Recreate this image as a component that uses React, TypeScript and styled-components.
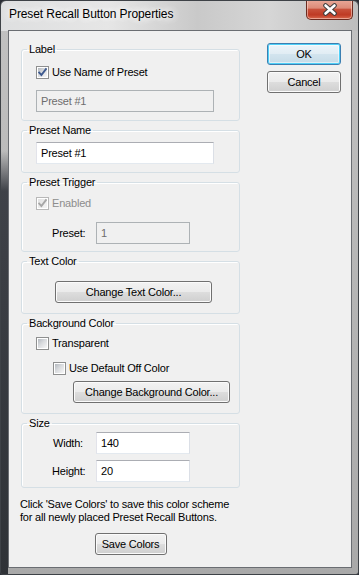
import React from "react";
import styled, { createGlobalStyle, css } from "styled-components";

const Global = createGlobalStyle`
  html, body { margin: 0; padding: 0; background: #2b2f36; }
  body { font-family: "Liberation Sans", Arial, sans-serif; }
  * { box-sizing: border-box; }
`;

const Window = styled.div`
  width: 359px;
  height: 575px;
  border: 1px solid #3e4247;
  border-radius: 6px 6px 3px 3px;
  display: flex;
  flex-direction: column;
  padding: 0 6px 6px 7px;
  background:
    linear-gradient(to bottom, rgba(0,0,0,0) 0, rgba(0,0,0,0) 150px, rgba(28,32,40,0.78) 190px, rgba(20,24,30,0.82) 100%) left top / 7px 100% no-repeat,
    linear-gradient(to right, #dedfe0 0%, #e6e6e6 30%, #c9c9c9 55%, #d6d6d6 75%, #bdbdbd 100%) top / 100% 30px no-repeat,
    linear-gradient(to bottom, #c2c2c2, #a9a9a9);
  overflow: hidden;
`;

const TitleBar = styled.div`
  height: 29px;
  display: flex;
  align-items: flex-start;
  justify-content: space-between;
  margin-right: -1px;
`;

const Title = styled.div`
  padding: 6px 0 0 1px;
  font-size: 12px;
  line-height: 15px;
  letter-spacing: -0.1px;
  color: #000;
  text-shadow: 0 0 6px #fff, 0 0 10px #fff, 0 0 14px #fff;
`;

const CloseButton = styled.div`
  width: 47px;
  height: 20px;
  margin-top: -1px;
  border: 1px solid #6b2b20;
  border-top: none;
  border-radius: 0 0 5px 5px;
  background: linear-gradient(to bottom, #e9a999 0%, #dc8b78 42%, #c8503a 50%, #bf3a24 78%, #d8674c 100%);
  box-shadow: inset 0 0 0 1px rgba(255, 220, 210, 0.55);
  display: flex;
  align-items: center;
  justify-content: center;
`;

const Client = styled.div`
  flex: 1;
  border: 1px solid #6a6d72;
  background: #f0f0f0;
  display: flex;
  padding: 12px 0 0 12px;
  font-size: 11px;
  letter-spacing: -0.2px;
  color: #000;
`;

const LeftColumn = styled.div`
  width: 219px;
  display: flex;
  flex-direction: column;
  gap: 3px;
`;

const RightColumn = styled.div`
  margin-left: 27px;
  width: 74px;
  display: flex;
  flex-direction: column;
  gap: 6px;
`;

const Group = styled.fieldset`
  margin: 0;
  padding: 0;
  min-width: 0;
  border: 1px solid #d5dfe5;
  border-radius: 3px;
  box-shadow: inset 1px 1px 0 #fff;
`;

const Legend = styled.legend`
  margin-left: 5px;
  padding: 0 2px;
  font-size: 11px;
  line-height: 13px;
  height: 13px;
  color: #000;
`;

const GroupBody = styled.div<{ $pt: number; $pb: number; $gap?: number; $pl?: number }>`
  display: flex;
  flex-direction: column;
  align-items: flex-start;
  padding: ${(p) => p.$pt}px 0 ${(p) => p.$pb}px ${(p) => p.$pl ?? 14}px;
  gap: ${(p) => p.$gap ?? 0}px;
`;

const CheckRow = styled.label<{ $indent?: number; $disabled?: boolean; $top?: number }>`
  display: flex;
  align-items: center;
  gap: 3px;
  height: 13px;
  margin: ${(p) => p.$top ?? 0}px 0 0 ${(p) => p.$indent ?? 0}px;
  line-height: 13px;
  color: ${(p) => (p.$disabled ? "#8d8d8d" : "#000")};
`;

const Box = styled.span<{ $disabled?: boolean }>`
  width: 13px;
  height: 13px;
  flex: none;
  border: 1px solid ${(p) => (p.$disabled ? "#b8b8b8" : "#8e8f8f")};
  padding: 1px;
  background:
    ${(p) =>
      p.$disabled
        ? "linear-gradient(135deg, #e2e2e2, #f4f4f4) content-box"
        : "linear-gradient(135deg, #b4b9bf 0%, #d9dbde 45%, #f7f7f7 100%) content-box"},
    #fbfbfb;
  box-shadow: inset 0 0 0 1px #fff;
  display: flex;
`;

const CheckMark = styled.svg`
  width: 11px;
  height: 11px;
  margin: -1px;
  flex: none;
`;

const TextField = styled.div<{ $w: number; $disabled?: boolean }>`
  width: ${(p) => p.$w}px;
  height: 22px;
  border: 1px solid;
  ${(p) =>
    p.$disabled
      ? css`
          border-color: #adb2b5;
          background: #f0f0f0;
          color: #6d6d6d;
        `
      : css`
          border-color: #abadb3 #dbdfe6 #e3e9ef #e2e3ea;
          background: #fff;
          color: #000;
        `}
  padding-left: 4px;
  line-height: 20px;
  font-size: 11px;
`;

const FieldRow = styled.div`
  display: grid;
  grid-template-columns: 44px auto;
  align-items: center;
  margin-left: 16px;
`;

const FieldLabel = styled.span<{ $shift?: number }>`
  margin-left: ${(p) => p.$shift ?? 0}px;
`;

const Button = styled.button<{ $w?: number; $primary?: boolean; $indent?: number; $top?: number }>`
  width: ${(p) => (p.$w ? `${p.$w}px` : "100%")};
  height: 22px;
  margin: ${(p) => p.$top ?? 0}px 0 0 ${(p) => p.$indent ?? 0}px;
  padding: 0;
  border: 1px solid #707070;
  border-radius: 3px;
  font-family: "Liberation Sans", Arial, sans-serif;
  font-size: 11px;
  letter-spacing: -0.2px;
  color: #000;
  background: linear-gradient(to bottom, #f2f2f2 0%, #ebebeb 48%, #dddddd 52%, #cfcfcf 100%);
  box-shadow: inset 0 0 0 1px #fbfbfb;
  ${(p) =>
    p.$primary &&
    css`
      border-color: #3c7fb1;
      background: linear-gradient(to bottom, #edf5fa 0%, #e1edf4 48%, #d2e4ee 52%, #c5dbe7 100%);
      box-shadow: inset 0 0 0 1px #4fd0f8, inset 0 0 0 2px rgba(255,255,255,0.5);
    `}
`;

const Note = styled.div`
  margin-top: 7px;
  margin-left: -1px;
  line-height: 13px;
  white-space: nowrap;
`;

const SaveRow = styled.div`
  display: flex;
  justify-content: center;
  margin-top: 6px;
`;

function Check({ checked, disabled }: { checked?: boolean; disabled?: boolean }) {
  return (
    <Box $disabled={disabled}>
      {checked && (
        <CheckMark viewBox="0 0 11 11">
          <path
            d="M2.2 5.6 L4.4 8 L8.9 2.2"
            fill="none"
            stroke={disabled ? "#a7a7a7" : "#3e5a8f"}
            strokeWidth="1.9"
            strokeLinecap="square"
          />
        </CheckMark>
      )}
    </Box>
  );
}

export default function App() {
  return (
    <>
      <Global />
      <Window>
        <TitleBar>
          <Title>Preset Recall Button Properties</Title>
          <CloseButton>
            <svg width="16" height="13" viewBox="0 0 16 13">
              <path d="M3.5 2.5 L12.5 10.5 M12.5 2.5 L3.5 10.5" stroke="#3d3d3d" strokeWidth="4.6" strokeLinecap="round" />
              <path d="M3.5 2.5 L12.5 10.5 M12.5 2.5 L3.5 10.5" stroke="#ffffff" strokeWidth="2.6" strokeLinecap="round" />
            </svg>
          </CloseButton>
        </TitleBar>
        <Client>
          <LeftColumn>
            <Group>
              <Legend>Label</Legend>
              <GroupBody $pt={10} $pb={8} $gap={11}>
                <CheckRow>
                  <Check checked />
                  Use Name of Preset
                </CheckRow>
                <TextField $w={178} $disabled>Preset #1</TextField>
              </GroupBody>
            </Group>
            <Group>
              <Legend>Preset Name</Legend>
              <GroupBody $pt={5} $pb={8}>
                <TextField $w={178}>Preset #1</TextField>
              </GroupBody>
            </Group>
            <Group>
              <Legend>Preset Trigger</Legend>
              <GroupBody $pt={8} $pb={7} $gap={12}>
                <CheckRow $disabled>
                  <Check checked disabled />
                  Enabled
                </CheckRow>
                <FieldRow>
                  <FieldLabel>Preset:</FieldLabel>
                  <TextField $w={94} $disabled>1</TextField>
                </FieldRow>
              </GroupBody>
            </Group>
            <Group>
              <Legend>Text Color</Legend>
              <GroupBody $pt={13} $pb={10} $pl={33}>
                <Button $w={157}>Change Text Color...</Button>
              </GroupBody>
            </Group>
            <Group>
              <Legend>Background Color</Legend>
              <GroupBody $pt={7} $pb={10}>
                <CheckRow>
                  <Check />
                  Transparent
                </CheckRow>
                <CheckRow $indent={17} $top={12}>
                  <Check />
                  Use Default Off Color
                </CheckRow>
                <Button $w={157} $indent={37} $top={6}>
                  Change Background Color...
                </Button>
              </GroupBody>
            </Group>
            <Group>
              <Legend>Size</Legend>
              <GroupBody $pt={2} $pb={5} $gap={6}>
                <FieldRow>
                  <FieldLabel $shift={1}>Width:</FieldLabel>
                  <TextField $w={94}>140</TextField>
                </FieldRow>
                <FieldRow>
                  <FieldLabel>Height:</FieldLabel>
                  <TextField $w={94}>20</TextField>
                </FieldRow>
              </GroupBody>
            </Group>
            <Note>
              Click 'Save Colors' to save this color scheme
              <br />
              for all newly placed Preset Recall Buttons.
            </Note>
            <SaveRow>
              <Button $w={72}>Save Colors</Button>
            </SaveRow>
          </LeftColumn>
          <RightColumn>
            <Button $primary>OK</Button>
            <Button>Cancel</Button>
          </RightColumn>
        </Client>
      </Window>
    </>
  );
}
